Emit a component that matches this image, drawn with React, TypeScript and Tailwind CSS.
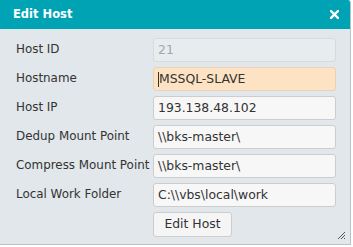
import React from 'react';

const rows = [
  { label: 'Host ID', value: '21', kind: 'disabled' },
  { label: 'Hostname', value: 'MSSQL-SLAVE', kind: 'focus' },
  { label: 'Host IP', value: '193.138.48.102', kind: 'normal' },
  { label: 'Dedup Mount Point', value: '\\\\bks-master\\', kind: 'normal' },
  { label: 'Compress Mount Point', value: '\\\\bks-master\\', kind: 'normal' },
  { label: 'Local Work Folder', value: 'C:\\\\vbs\\local\\work', kind: 'normal' },
];

const App: React.FC = () => {
  return (
    <div className="w-[353px] h-[247px] bg-white" style={{ fontFamily: '"DejaVu Sans", Verdana, sans-serif' }}>
      <div className="relative w-[351px] h-[245px] bg-[#e1e7ea] border-r border-b border-[#b9c2c7] rounded-tr-[3px] overflow-hidden">
        <div className="h-[29px] bg-[#00a3b4] flex items-center justify-between pl-[13px] pr-[11px]">
          <span className="text-white font-bold text-[11.5px]">Edit Host</span>
          <svg width="9" height="9" viewBox="0 0 9 9" className="text-white">
            <path d="M1 1 L8 8 M8 1 L1 8" stroke="currentColor" strokeWidth="2.4" strokeLinecap="square" />
          </svg>
        </div>

        <div className="pt-[9px] pl-[16px] flex flex-col gap-[5px]">
          {rows.map((row) => (
            <div key={row.label} className="flex items-center">
              <span className="w-[137px] whitespace-nowrap text-[11.9px] text-[#333]">{row.label}</span>
              <div
                className={`w-[183px] h-[24px] rounded-[3px] border flex items-center pl-[4px] text-[12.4px] whitespace-nowrap ${
                  row.kind === 'disabled'
                    ? 'bg-[#e8ecef] border-[#d6dbde] text-[#a4a9ad]'
                    : row.kind === 'focus'
                    ? 'bg-[#fde3c3] border-[#e9d2b6] text-[#333]'
                    : 'bg-[#f7f7f7] border-[#cdcdcd] text-[#333]'
                }`}
              >
                {row.kind === 'focus' && <span className="w-px h-[15px] bg-[#333]" />}
                {row.value}
              </div>
            </div>
          ))}
          <div className="flex">
            <div className="w-[137px]" />
            <button className="w-[79px] h-[25px] rounded-[3px] border border-[#cdcdcd] bg-[#f5f5f5] text-[12.4px] text-[#333]">
              Edit Host
            </button>
          </div>
        </div>

        <svg width="8" height="8" viewBox="0 0 8 8" className="absolute right-[4px] bottom-[4px]">
          <path d="M7 0 L0 7 M7 3 L3 7 M7 6 L6 7" stroke="#555" strokeWidth="1" />
        </svg>
      </div>
    </div>
  );
};

export default App;
